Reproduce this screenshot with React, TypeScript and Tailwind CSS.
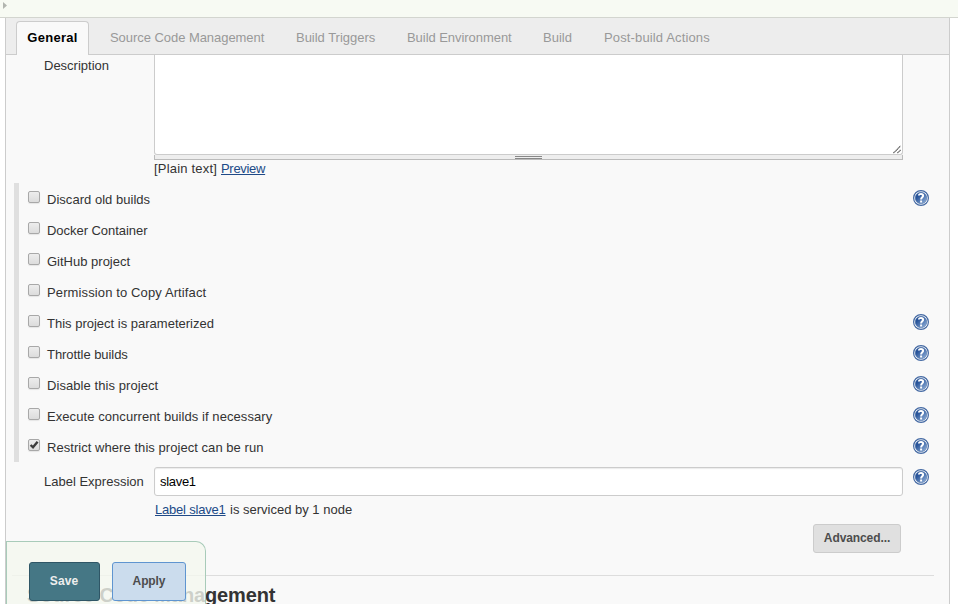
import React from 'react';

const tabs = [
  { label: 'Source Code Management', className: 'w-[186px] tracking-[-0.05px]' },
  { label: 'Build Triggers', className: 'w-[111px] tracking-[-0.02px]' },
  { label: 'Build Environment', className: 'w-[136px] tracking-[-0.05px]' },
  { label: 'Build', className: 'w-[61px]' },
  { label: 'Post-build Actions', className: 'tracking-[0.14px]' },
];

const options = [
  { label: 'Discard old builds', help: true, tracking: 'tracking-[0.03px]' },
  { label: 'Docker Container', tracking: 'tracking-[-0.04px]' },
  { label: 'GitHub project', tracking: 'tracking-normal' },
  { label: 'Permission to Copy Artifact', tracking: 'tracking-[0.12px]' },
  { label: 'This project is parameterized', help: true, tracking: 'tracking-normal' },
  { label: 'Throttle builds', help: true, tracking: 'tracking-[-0.06px]' },
  { label: 'Disable this project', help: true, tracking: 'tracking-[0.07px]' },
  { label: 'Execute concurrent builds if necessary', help: true, tracking: 'tracking-[0.07px]' },
  { label: 'Restrict where this project can be run', help: true, checked: true, tracking: 'tracking-[0.05px]' },
];

const HelpIcon: React.FC = () => (
  <svg width="16" height="16" viewBox="0 0 16 16" className="block shrink-0">
    <defs>
      <linearGradient id="help" x1="0" y1="0" x2="1" y2="1">
        <stop offset="0.3" stopColor="#28549a" />
        <stop offset="1" stopColor="#9ab8de" />
      </linearGradient>
    </defs>
    <circle cx="8" cy="8" r="7.4" fill="#fff" stroke="#4469a3" strokeWidth="1.2" />
    <circle cx="8" cy="8" r="5.8" fill="url(#help)" stroke="#3f66a0" strokeWidth="0.5" />
    <path d="M5.9 5.6C5.9 3.3 10.1 3.3 10.1 5.7C10.1 7.3 8.1 7.4 8.1 9.6" fill="none" stroke="#fff" strokeWidth="2" />
    <rect x="7.1" y="10.5" width="2" height="2" fill="#fff" />
  </svg>
);

const Checkbox: React.FC<{ checked?: boolean }> = ({ checked }) => (
  <span className="mt-2 block h-3 w-3 shrink-0 rounded-[2px] border border-[#a8a8a8] bg-linear-to-b from-[#ededed] to-[#dcdcdc] shadow-[0_1px_1px_rgba(0,0,0,0.08)]">
    {checked && (
      <svg width="10" height="10" viewBox="0 0 10 10" className="block">
        <path d="M1.6 5L4 7.3L8.6 1.8" fill="none" stroke="#3c3c3c" strokeWidth="2.4" />
      </svg>
    )}
  </span>
);

export default function App() {
  return (
    <div className="relative h-[604px] w-[958px] overflow-hidden bg-white font-['Liberation_Sans',Arial,sans-serif] text-[13px] leading-[15px] text-[#333]">
      {/* Breadcrumbs */}
      <div className="h-[18px] border-b border-[#d3d5cf] bg-[#f7faf3] pl-[3px] pt-[2px]">
        <svg width="4" height="7" viewBox="0 0 4 7" className="block">
          <path d="M0 0L4 3.5L0 7Z" fill="#b2b5af" />
        </svg>
      </div>

      <div className="ml-[5px] h-[586px] w-[945px] border-x border-[#ccc] bg-[#f9f9f9]">
        {/* Section tabs */}
        <div className="flex h-[37px] items-end border-b border-[#ccc] bg-[#ededed] pl-[10px]">
          <div className="-mb-px h-[34px] w-[73px] shrink-0 rounded-t-[4px] border border-b-0 border-[#ccc] bg-[#f9f9f9] pt-[8px] text-center font-bold tracking-[0.3px] text-black">
            General
          </div>
          <div className="flex pb-[9px] pl-[21px] text-[#999]">
            {tabs.map((tab) => (
              <span key={tab.label} className={`whitespace-nowrap ${tab.className}`}>{tab.label}</span>
            ))}
          </div>
        </div>

        {/* Description */}
        <div className="flex h-[128px] pl-[38px]">
          <div className="w-[110px] pt-[3px]">Description</div>
          <div className="w-[749px]">
            <div className="flex h-[100px] items-end justify-end rounded-b-[3px] border border-t-0 border-[#ccc] bg-white">
              <svg width="9" height="9" viewBox="0 0 9 9" className="block">
                <path d="M0.5 8L7.5 1M4.5 8L7.5 5" stroke="#444" strokeWidth="1.1" strokeDasharray="1.2 0.4" />
              </svg>
            </div>
            <div className="flex h-[5px] justify-center border border-t-0 border-[#bbb] bg-[#eee] pt-px">
              <div className="h-[3px] w-[27px] border-y border-[#888]" />
            </div>
            <div className="flex pt-px">
              <span className="w-[67px] tracking-[0.2px]">[Plain text]</span>
              <a className="tracking-[-0.3px] text-[#204a87] underline">Preview</a>
            </div>
          </div>
        </div>

        {/* Job options */}
        <div className="ml-[8px] border-l-[5px] border-[#dfdfdf]">
          {options.map((option) => (
            <div key={option.label} className="flex h-[31px] pl-[9px]">
              <Checkbox checked={option.checked} />
              <span className={`w-[873px] pl-[7px] pt-[9px] ${option.tracking}`}>{option.label}</span>
              {option.help && <div className="pt-[7px]"><HelpIcon /></div>}
            </div>
          ))}
        </div>

        {/* Label expression */}
        <div className="flex pl-[38px] pt-[5px]">
          <div className="w-[110px] pt-[7px]">Label Expression</div>
          <div className="h-[29px] w-[749px] rounded-[3px] border border-[#ccc] bg-white pl-[5px] pt-[6px] tracking-[-0.3px] text-black shadow-[inset_0_1px_1px_rgba(0,0,0,0.08)]">
            slave1
          </div>
          <div className="pl-[10px] pt-[2px]"><HelpIcon /></div>
        </div>
        <div className="flex pl-[149px] pt-[6px]">
          <a className="w-[71px] whitespace-nowrap tracking-[-0.2px] text-[#204a87] underline">Label slave1</a>
          <span className="pl-[4px]">is serviced by 1 node</span>
        </div>

        <div className="flex justify-end pr-[48px] pt-[7px]">
          <button className="h-[29px] w-[88px] rounded-[3px] border border-[#ccc] bg-[#e0e0e0] text-[12px] font-bold tracking-[-0.1px] text-[#4d4d4d]">
            Advanced...
          </button>
        </div>

        <div className="ml-[6px] mr-[15px] mt-[22px] border-t border-[#ddd] pl-[15px] pt-[7px]">
          <h2 className="whitespace-nowrap text-[20px] font-bold leading-[24px] tracking-[-0.13px] text-[#333]">Source Code Management</h2>
        </div>
      </div>

      {/* Sticky save bar */}
      <div className="absolute bottom-0 left-[6px] flex h-[63px] w-[200px] gap-[12px] rounded-tr-[10px] border border-b-0 border-[#a8cbb9] bg-[#f4f8ef]/80 pl-[22px] pt-[20px]">
        <button className="h-[39px] w-[71px] rounded-[3px] border border-[#2f5666] bg-[#457785] pr-px text-[12px] font-bold tracking-[0.1px] text-[#eee]">
          Save
        </button>
        <button className="h-[39px] w-[74px] rounded-[3px] border border-[#5f95d0] bg-[#cbdced] text-[12px] font-bold tracking-[-0.1px] text-[#4d4d4d]">
          Apply
        </button>
      </div>
    </div>
  );
}
